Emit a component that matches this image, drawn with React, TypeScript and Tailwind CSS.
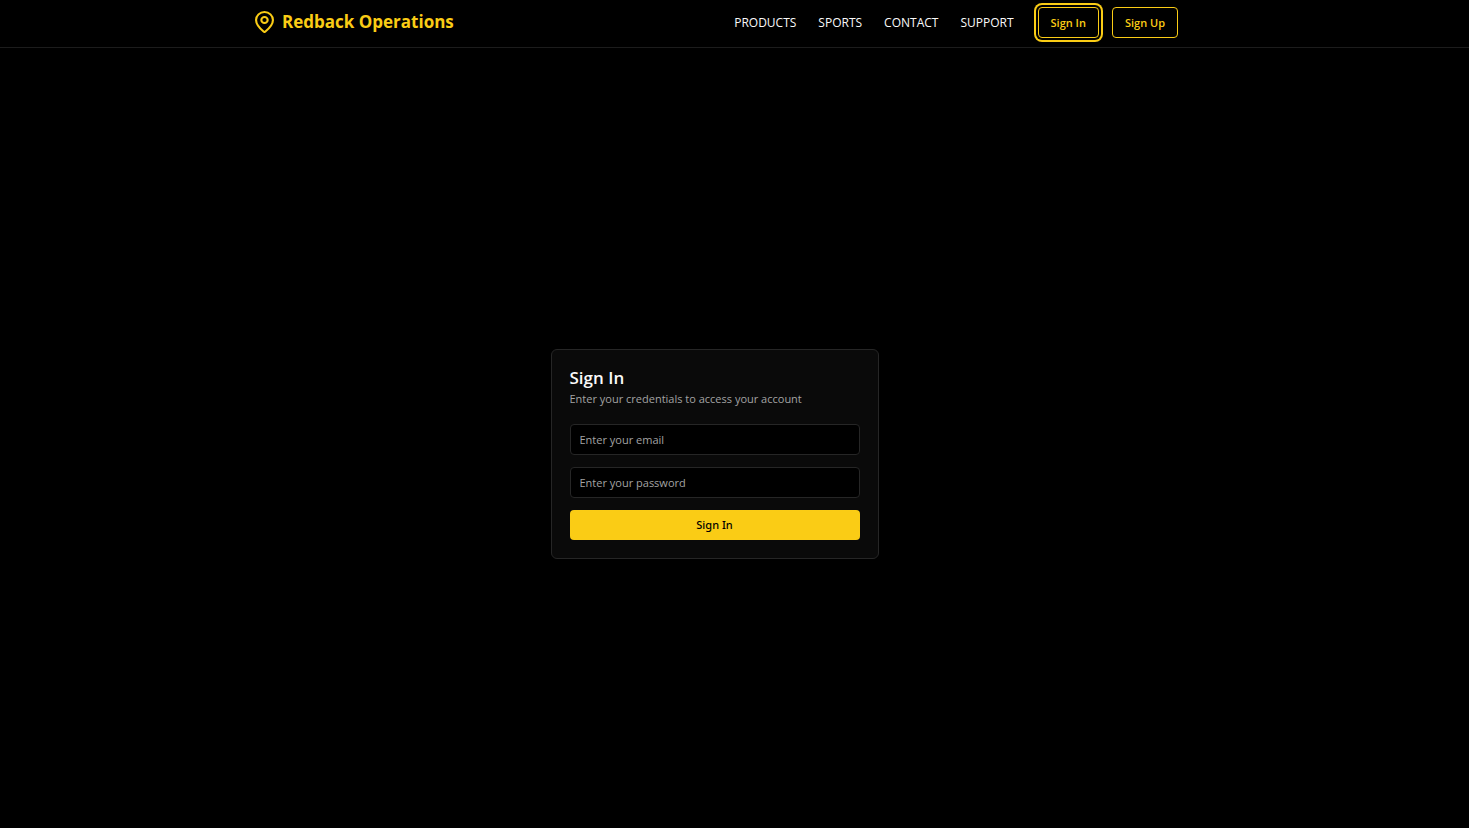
import { MapPin } from "lucide-react";

const links = ["Products", "Sports", "Contact", "Support"];

const outlineButton =
  "h-[31px] rounded border border-[#facc15] bg-black px-3 pt-[2px] text-[11px] font-semibold text-[#facc15]";
const field =
  "h-[31px] w-full rounded border border-[#262626] bg-black px-[9px] text-[11px] text-white placeholder:text-[#a3a3a3] placeholder:opacity-100 outline-none";

function Header() {
  return (
    <header className="border-b border-[#1c1c1c] pr-9">
      <div className="mx-auto flex h-[47px] max-w-[923px] items-center justify-between pb-[2px]">
        <a href="#" className="flex items-center gap-2 pb-px text-[#facc15]">
          <MapPin className="h-[22px] w-[19px]" strokeWidth={2} preserveAspectRatio="none" viewBox="3 1 18 22" />
          <span className="text-[17px] leading-6 font-bold">Redback Operations</span>
        </a>
        <div className="flex items-center gap-6">
          <nav className="flex items-center gap-[22px]">
            {links.map((link) => (
              <a key={link} href="#" className="text-[12px] leading-4 font-medium text-[#fafafa] uppercase">
                {link}
              </a>
            ))}
          </nav>
          <div className="flex items-center gap-[13px]">
            <button type="button" className={`${outlineButton} ring-2 ring-[#facc15] ring-offset-2 ring-offset-black`}>
              Sign In
            </button>
            <button type="button" className={outlineButton}>
              Sign Up
            </button>
          </div>
        </div>
      </div>
    </header>
  );
}

function SignInCard() {
  return (
    <section className="w-full max-w-[328px] rounded-md border border-[#262626] bg-[#0a0a0a] p-[18px]">
      <h1 className="text-[17px] leading-5 font-semibold text-[#fafafa]">Sign In</h1>
      <p className="mt-[3px] text-[11px] leading-4 text-[#a3a3a3]">Enter your credentials to access your account</p>
      <form className="mt-[17px] flex flex-col gap-3" onSubmit={(e) => e.preventDefault()}>
        <input type="email" aria-label="Email" placeholder="Enter your email" className={field} />
        <input type="password" aria-label="Password" placeholder="Enter your password" className={field} />
        <button type="submit" className="h-[30px] rounded bg-[#facc15] font-['Noto_Sans',sans-serif] text-[11px] font-medium text-black">
          Sign In
        </button>
      </form>
    </section>
  );
}

export default function App() {
  return (
    <div className="flex min-h-screen flex-col bg-black font-['Open_Sans','Noto_Sans',sans-serif]">
      <Header />
      <main className="flex flex-1 items-center justify-center pt-8 pr-10">
        <SignInCard />
      </main>
    </div>
  );
}
